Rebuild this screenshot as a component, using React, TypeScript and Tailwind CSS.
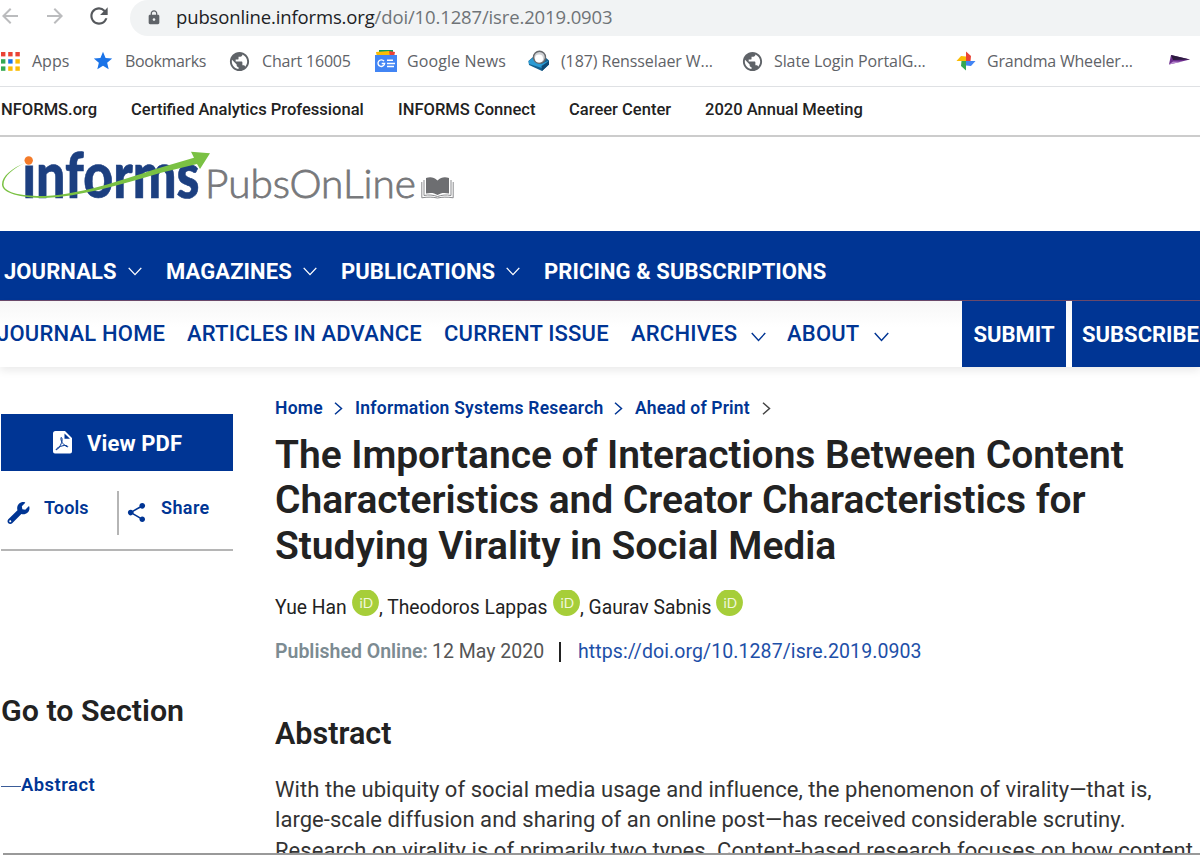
import { FaWrench } from 'react-icons/fa'
import { MdArrowBack, MdArrowForward, MdLock, MdPublic, MdRefresh, MdShare, MdStar } from 'react-icons/md'

const APP_COLORS = ['#ea4335', '#ea4335', '#ea4335', '#34a853', '#1a73e8', '#fbbc04', '#34a853', '#fbbc04', '#fbbc04']

function AppsIcon() {
  return (
    <svg viewBox="0 0 20 19" className="w-5 h-[19px] shrink-0">
      {APP_COLORS.map((color, i) => (
        <rect key={i} x={1 + (i % 3) * 7.2} y={Math.floor(i / 3) * 7.2} width="4.4" height="4.4" fill={color} />
      ))}
    </svg>
  )
}

function NewsIcon() {
  return (
    <svg viewBox="0 0 22 22" className="w-[22px] h-[22px] shrink-0">
      <path d="M4 0h14v6H4z" fill="#0c9d58" />
      <path d="M14 1l6 1-1 5h-6z" fill="#ea4335" />
      <path d="M1 2l13-1 1 6H2z" fill="#fbbc04" />
      <path d="M0 5h22v17H0z" fill="#4285f4" />
      <path d="M9 11.2a3.3 3.3 0 1 0 .6 2.3H6.7" fill="none" stroke="#fff" strokeWidth="1.4" />
      <path d="M12 10.3h6M12 13.4h8M12 16.5h7" stroke="#fff" strokeWidth="1.5" />
    </svg>
  )
}

function MailIcon() {
  return (
    <svg viewBox="0 0 22 22" className="w-[22px] h-[22px] shrink-0">
      <path d="M.5 11L5 7h12l4 3.500v4L14 21 1 15z" fill="#14608f" />
      <path d="M.5 11L5 8l8 6 8-3.500L14 18 1 14z" fill="#2b9bd4" />
      <path d="M13.500 16L21 11v3.500L14 21z" fill="#0e4a76" />
      <circle cx="11.500" cy="7.300" r="6" fill="#cfd1d4" stroke="#66696d" strokeWidth="1.400" />
      <circle cx="11" cy="8.500" r="4" fill="#fff" />
    </svg>
  )
}

function PhotosIcon() {
  return (
    <svg viewBox="0 0 20 20" className="w-5 h-5 shrink-0">
      <path d="M10 .5v9.500h4.500l.5-5z" fill="#ea4335" />
      <path d="M19.500 10H10v4.500l5 .5z" fill="#4285f4" />
      <path d="M10 19.500V10H5.500L5 15z" fill="#34a853" />
      <path d="M.5 10H10V5.500L5 5z" fill="#fbbc04" />
    </svg>
  )
}

function PlaneIcon() {
  return (
    <svg viewBox="0 0 22 12" className="w-[22px] h-3 shrink-0">
      <path d="M3 0l19 4.500L1 9.500z" fill="#6b2c8c" />
      <path d="M3 0l19 4.500L5 5z" fill="#2b1b3d" />
      <path d="M1 9.500L5 6.500l9 .3z" fill="#b98bd0" />
    </svg>
  )
}

function PdfIcon() {
  return (
    <svg viewBox="0 0 19 23" className="w-[19px] h-[23px] shrink-0">
      <path d="M2.500 0H12l7 7v13.500a2 2 0 0 1-2 2H2a2 2 0 0 1-2-2V2.500A2.500 2.500 0 0 1 2.500 0z" fill="#fff" />
      <path d="M11.500 2.500v5.300h5.500z" fill="#003594" />
      <path
        d="M8 6.500c-.6 3 1.500 7 6.500 9.500.8-1.200-1.500-2-4.500-1.300-3 .6-6.500 2.300-7 4 2 .4 5.500-5.500 6-8.700.2-1.800.1-3.500-1-3.500z"
        fill="none"
        stroke="#003594"
        strokeWidth="1"
      />
    </svg>
  )
}

function ChevronDown({ className }: { className: string }) {
  return (
    <svg viewBox="0 0 14 10" preserveAspectRatio="none" fill="none" stroke="currentColor" strokeWidth="1.300" className={className}>
      <path d="M.7 1L7 8.500 13.300 1" />
    </svg>
  )
}

function ChevronRight({ className }: { className: string }) {
  return (
    <svg viewBox="0 0 9 13" fill="none" stroke="currentColor" strokeWidth="1.500" className={className}>
      <path d="M1 .7l6.500 5.800L1 12.300" />
    </svg>
  )
}

function Orcid() {
  return (
    <svg viewBox="0 0 27 26" className="w-[27px] h-[26px] shrink-0">
      <circle cx="13.500" cy="12.500" r="13.400" fill="#a6ce39" />
      <text x="7.500" y="17.500" fontFamily="Lato" fontWeight="400" fontSize="13.500" fill="#f2f8de">iD</text>
    </svg>
  )
}

function Logo() {
  return (
    <svg viewBox="0 0 460 94" className="w-[460px] h-[94px]">
      <text
        x="22.500"
        y="61"
        textLength="177"
        lengthAdjust="spacingAndGlyphs"
        fontFamily="Lato"
        fontWeight="900"
        fontSize="62"
        fill="#1c3f80"
        stroke="#1c3f80"
        strokeWidth=".6"
      >
        informs
      </text>
      <path d="M21 8h15v20.500H21z" fill="#fff" />
      <path
        d="M26 25.500C12 31 2 39 2 47.500 2 56 20 61 45 61c35-1.500 75-13 115-25l37-9 3 5 10-15.700-19-1.600 3 6-34 10C130 40 85 57 45 59 20 59.500 3.500 55 3.500 47.500 3.500 39.500 13 31.500 26 25.500z"
        fill="#7ac143"
      />
      <circle cx="28.700" cy="23.500" r="4.200" fill="#f47b29" />
      <text
        x="205"
        y="61"
        textLength="211"
        lengthAdjust="spacingAndGlyphs"
        fontFamily="Lato"
        fontWeight="300"
        fontSize="39.500"
        fill="#77787b"
        stroke="#77787b"
        strokeWidth=".8"
      >
        PubsOnLine
      </text>
      <path d="M426 41c4-1.500 8-1 11.500 2.500C441 40 445 39.500 449 41v15.500c-4-1-8-1-11.500 1.500-3.500-2.500-7.500-2.500-11.500-1.500z" fill="#6d6e71" />
      <path
        d="M424 43v15.500c5-1 9-.5 13.500 1 4.500-1.500 8.500-2 13.500-1V43M421.800 45v15.800c6-1 11-.8 15.700.2 4.700-1 9.700-1.200 15.700-.2V45"
        fill="none"
        stroke="#8a8b8e"
        strokeWidth="1"
      />
    </svg>
  )
}

function Browser() {
  return (
    <div className="font-['Open_Sans',sans-serif] text-[#5f6368]">
      <div className="flex h-9">
        <div className="flex w-[130px] shrink-0 pt-1">
          <MdArrowBack className="-ml-[2px] w-6 h-6 shrink-0 text-[#bbbcbe]" />
          <MdArrowForward className="ml-[21px] w-6 h-6 shrink-0 text-[#bbbcbe]" />
          <MdRefresh className="ml-[19px] -mt-[1px] w-[26px] h-[26px] shrink-0 text-[#55585c]" />
        </div>
        <div className="flex flex-1 items-center rounded-l-full bg-[#f1f3f4]">
          <MdLock className="ml-[16px] -mt-[2px] w-4 h-[17px]" />
          <div className="ml-[14px] -mt-[2px] whitespace-nowrap text-[18.500px] leading-9 tracking-[-0.140px] text-[#6f7377]">
            <span className="text-[#202124]">pubsonline.informs.org</span>/doi/10.1287/isre.2019.0903
          </div>
        </div>
      </div>
      <div className="flex h-[51px] items-center border-b border-[#dfe1e4] whitespace-nowrap text-base tracking-[-0.100px]">
        <div className="flex w-[94px] shrink-0 items-center gap-[12px]"><AppsIcon /><span className="tracking-normal">Apps</span></div>
        <div className="flex w-[135px] shrink-0 items-center gap-[11px]"><MdStar className="-ml-[2px] w-[22px] h-[22px] text-[#1a73e8]" /><span className="tracking-[-0.350px]">Bookmarks</span></div>
        <div className="flex w-[146px] shrink-0 items-center gap-[11px]"><MdPublic className="-ml-[1px] w-[23px] h-[23px]" /><span className="tracking-[-0.200px]">Chart 16005</span></div>
        <div className="flex w-[153px] shrink-0 items-center gap-[10px]"><NewsIcon /><span className="tracking-[0.100px]">Google News</span></div>
        <div className="flex w-[213px] shrink-0 items-center gap-[11px]"><MailIcon />(187) Rensselaer W...</div>
        <div className="flex w-[215px] shrink-0 items-center gap-[10px]"><MdPublic className="w-[23px] h-[23px]" />Slate Login PortalG...</div>
        <div className="flex w-[212px] shrink-0 items-center gap-[11px]"><PhotosIcon /><span className="tracking-[-0.200px]">Grandma Wheeler...</span></div>
        <PlaneIcon />
      </div>
    </div>
  )
}

function SiteHeader() {
  return (
    <header>
      <nav className="flex h-[50px] items-center border-b-2 border-[#ccc] pb-[2px] whitespace-nowrap text-[16.550px] font-medium text-[#222]">
        <span className="w-[131px] shrink-0 pl-[1px]">NFORMS.org</span>
        <span className="w-[267px] shrink-0">Certified Analytics Professional</span>
        <span className="w-[171px] shrink-0">INFORMS Connect</span>
        <span className="w-[136px] shrink-0">Career Center</span>
        <span>2020 Annual Meeting</span>
      </nav>
      <Logo />
      <nav className="flex h-[70px] items-center border-b border-[#6b4a6b] bg-[#003594] pt-[11px] whitespace-nowrap text-[22px] font-bold tracking-[0.080px] text-white">
        <span className="w-[128px] shrink-0 pl-[4px]">JOURNALS</span>
        <ChevronDown className="w-[14px] h-[9px] shrink-0" />
        <span className="ml-[24px] w-[133px] shrink-0">MAGAZINES</span>
        <ChevronDown className="ml-[4px] w-[14px] h-[9px] shrink-0" />
        <span className="ml-[24px] w-[161px] shrink-0">PUBLICATIONS</span>
        <ChevronDown className="ml-[4px] w-[14px] h-[9px] shrink-0" />
        <span className="ml-[24px]">PRICING &amp; SUBSCRIPTIONS</span>
      </nav>
      <nav className="flex h-[66px] items-center bg-gradient-to-b from-[#f7f7f7] to-white to-40% whitespace-nowrap text-[22px] font-medium tracking-[0.200px] text-[#003594] shadow-[0_4px_8px_rgba(0,0,0,0.080)]">
        <span className="-ml-[3px] -mt-[2px] w-[190px] shrink-0">JOURNAL HOME</span>
        <span className="-mt-[2px] w-[257px] shrink-0">ARTICLES IN ADVANCE</span>
        <span className="-mt-[2px] w-[187px] shrink-0">CURRENT ISSUE</span>
        <span className="-mt-[2px] w-[120px] shrink-0">ARCHIVES</span>
        <ChevronDown className="mt-[5px] w-[15px] h-[10px] shrink-0" />
        <span className="-mt-[2px] ml-[21px] w-[87px] shrink-0">ABOUT</span>
        <ChevronDown className="mt-[5px] w-[15px] h-[10px] shrink-0" />
        <span className="ml-[73px] h-full w-[104px] shrink-0 bg-[#003594] text-center font-bold leading-[67px] tracking-normal text-white">SUBMIT</span>
        <span className="ml-[6px] h-full w-[128px] shrink-0 bg-[#003594] pl-[10px] font-bold leading-[67px] tracking-normal text-white">SUBSCRIBE</span>
      </nav>
    </header>
  )
}

function Sidebar() {
  return (
    <aside className="w-[275px] shrink-0 pl-[1px] pt-[47px]">
      <button className="flex h-[57px] w-[232px] items-center bg-[#003594] pl-[52px] text-[22px] font-bold tracking-[0.100px] text-white">
        <PdfIcon />
        <span className="ml-[15px] mt-[2px] whitespace-nowrap">View PDF</span>
      </button>
      <div className="flex h-[80px] w-[232px] border-b-2 border-[#b5b5b5] pt-5 text-lg font-semibold text-[#003594]">
        <div className="flex h-[44px] w-[118px] border-r-2 border-[#b5b5b5]">
          <FaWrench className="ml-[6px] mt-[11px] w-[23px] h-[22px]" />
          <span className="ml-[14px] mt-[3px] tracking-[0.150px]">Tools</span>
        </div>
        <MdShare className="ml-[6px] mt-[10px] w-[23px] h-[23px]" />
        <span className="ml-[13px] mt-[3px] tracking-[0.400px]">Share</span>
      </div>
      <h2 className="mt-[140px] whitespace-nowrap text-[30.400px] leading-10 font-semibold text-[#222]">Go to Section</h2>
      <a className="mt-[40px] flex items-center text-[18.400px] leading-7 font-semibold tracking-[0.500px] text-[#003594]">
        <span className="mt-[3px] w-5 border-t border-[#3a5c98]" />
        Abstract
      </a>
    </aside>
  )
}

function Article() {
  return (
    <main className="min-w-0 flex-1 pt-[29px] whitespace-nowrap text-[#222]">
      <div className="flex h-6 items-center text-[17.500px] font-semibold tracking-[0.240px] text-[#003594]">
        <span className="w-[59px]">Home</span>
        <ChevronRight className="w-[9px] h-[13px]" />
        <span className="ml-[12px] w-[259px]">Information Systems Research</span>
        <ChevronRight className="w-[9px] h-[13px]" />
        <span className="ml-[12px] w-[127px] tracking-[0.150px]">Ahead of Print</span>
        <ChevronRight className="w-[9px] h-[13px] text-[#444]" />
      </div>
      <h1 className="mt-[13px] text-[39px] font-semibold leading-[45.300px] tracking-[-0.050px]">
        The Importance of Interactions Between Content<br />
        Characteristics and Creator Characteristics for<br />
        Studying Virality in Social Media
      </h1>
      <div className="mt-[21px] flex h-[32px] text-[19.300px] leading-[35px]">
        <span className="w-[77px]">Yue Han</span><Orcid />
        <span className="w-[174px]">, Theodoros Lappas</span><Orcid />
        <span className="w-[136px]">, Gaurav Sabnis</span><Orcid />
      </div>
      <div className="mt-[16px] flex h-[28px] items-center text-[19.500px] text-[#555]">
        <span className="w-[157px] font-semibold text-[#7c8b92]">Published Online:</span>
        <span className="w-[127px]">12 May 2020</span>
        <span className="h-5 w-[2px] bg-[#222]" />
        <span className="ml-[17px] tracking-[0.090px] text-[#1d4fa8]">https://doi.org/10.1287/isre.2019.0903</span>
      </div>
      <h2 className="mt-[48px] text-[30.500px] font-semibold leading-10">Abstract</h2>
      <p className="mt-[21px] h-[78px] overflow-hidden text-[22px] leading-[30.500px] tracking-[0.050px] text-[#333]">
        With the ubiquity of social media usage and influence, the phenomenon of virality—that is,<br />
        large-scale diffusion and sharing of an online post—has received considerable scrutiny.<br />
        Research on virality is of primarily two types. Content-based research focuses on how content
      </p>
    </main>
  )
}

export default function App() {
  return (
    <div className="flex h-[855px] w-[1200px] flex-col overflow-hidden bg-white font-[Roboto,sans-serif]">
      <Browser />
      <SiteHeader />
      <div className="flex h-[486px] shrink-0">
        <Sidebar />
        <Article />
      </div>
      <div className="ml-[3px] h-[2px] shrink-0 bg-[#999]" />
    </div>
  )
}
